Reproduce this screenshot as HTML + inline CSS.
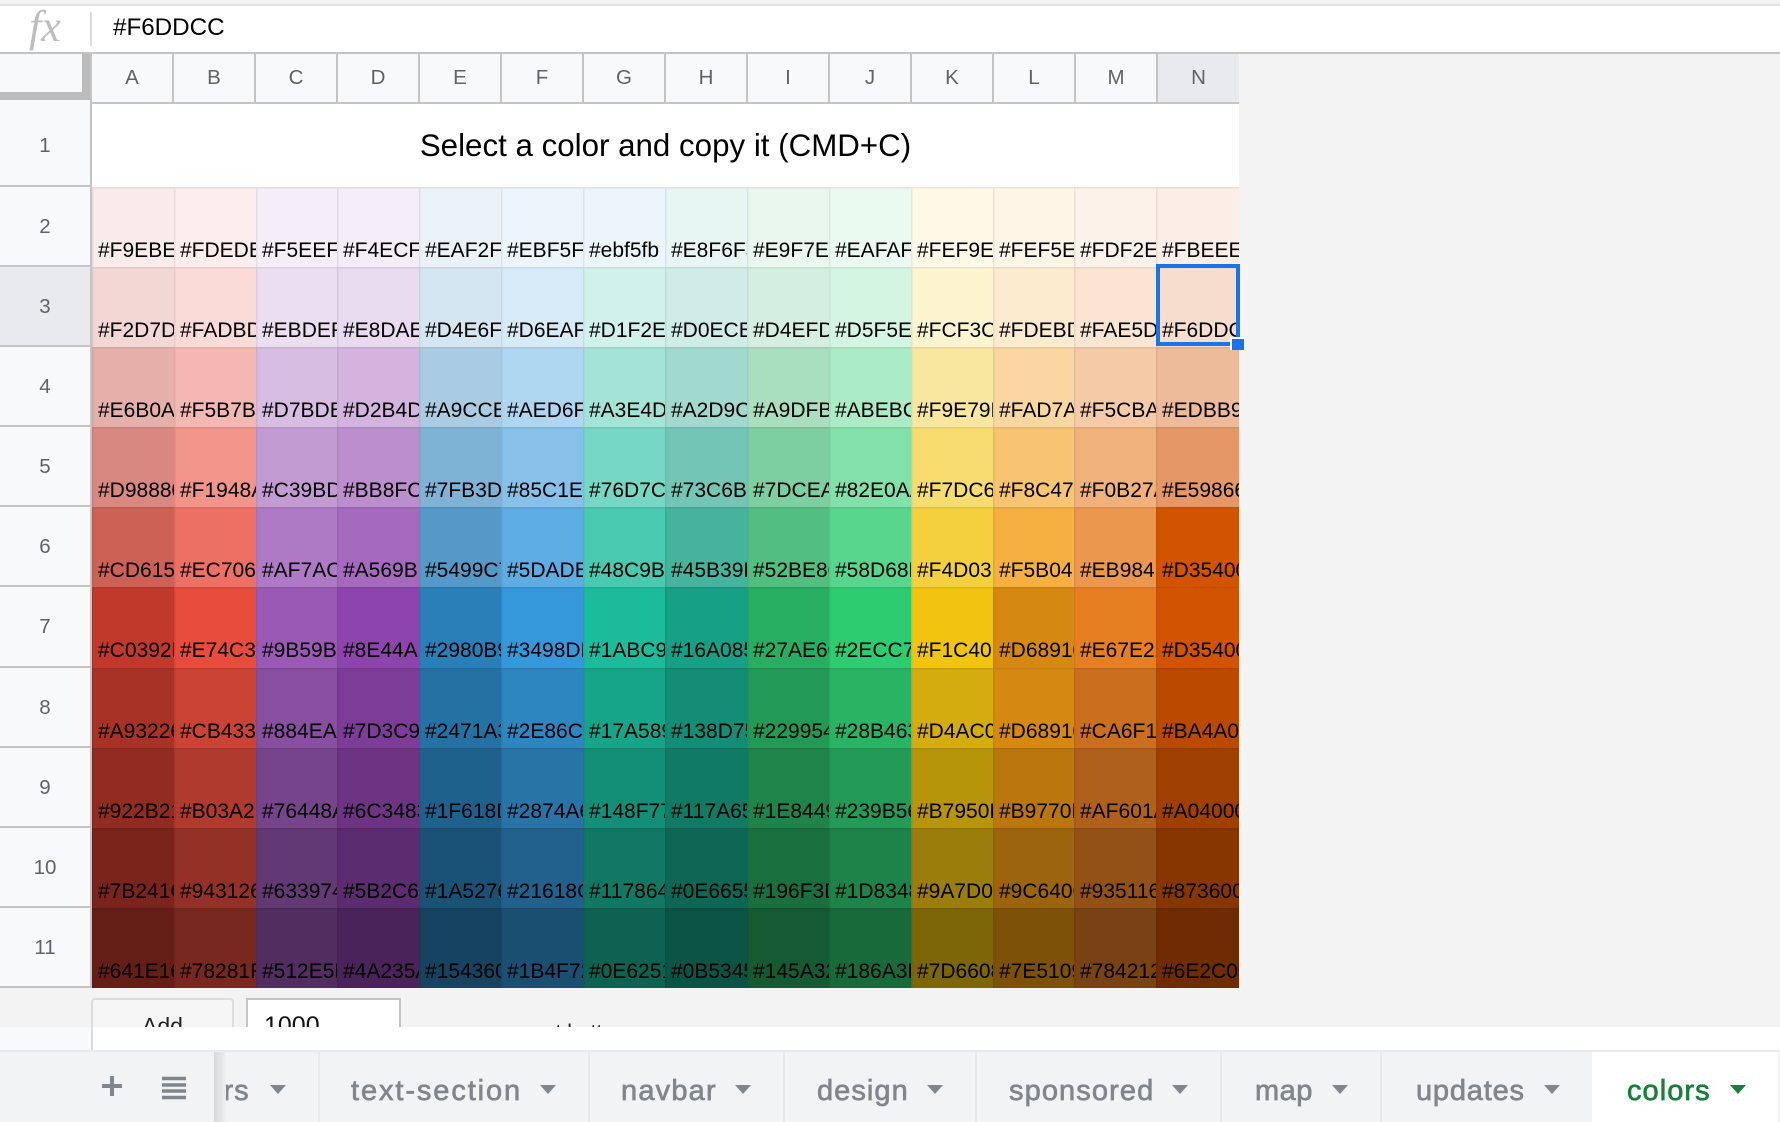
<!DOCTYPE html>
<html><head><meta charset="utf-8"><title>colors</title>
<style>
html,body{margin:0;padding:0;width:1780px;height:1122px;overflow:hidden;background:#f3f3f3;font-family:"Liberation Sans",Arial,sans-serif}
.a{position:absolute}
#topline{left:0;top:4px;width:1780px;height:2px;background:#e0e0e0}
#fbar{left:0;top:6px;width:1780px;height:47px;background:#fff}
#fbline{left:0;top:52px;width:1780px;height:2px;background:#c4c4c4}
#fx{left:29px;top:3px;font:italic 44px/48px "Liberation Serif",serif;color:#bdbdbd}
#fsep{left:90px;top:12px;width:2px;height:34px;background:#dcdcdc}
#ftext{left:113px;top:14px;font-size:24.2px;line-height:28px;color:#000}
#corner{left:0;top:54px;width:91px;height:49px;background:#f8f9fa}
#cb1{left:82px;top:54px;width:9px;height:46px;background:#bcbcbc}
#cb2{left:0;top:92px;width:91px;height:8px;background:#bcbcbc}
#cols{left:90px;top:54px;width:1149px;height:50px;display:grid;grid-template-columns:repeat(13,82px) 83px;background:#f8f9fa}
#cols div{box-sizing:border-box;height:50px;border-left:2px solid #c4c4c4;border-bottom:2px solid #c4c4c4;text-align:center;font-size:20.5px;line-height:48px;color:#5f6368}
#cols div.s{background:#e8eaed}
#rows{left:0;top:103px;width:92px}
#rows div{box-sizing:border-box;width:92px;background:#f8f9fa;border-right:2px solid #c4c4c4;border-bottom:2px solid #c4c4c4;text-align:center;padding-right:0;font-size:20.5px;color:#5f6368;height:80.1px;line-height:80px}
#title{left:92px;top:104px;width:1147px;height:83px;background:#fff;text-align:center;font-size:31.3px;line-height:84px;color:#000}
#grid{left:92px;top:187px;width:1147px;display:grid;grid-template-columns:82px 82px 81px 82px 82px 82px 82px 82px 82px 82px 82px 81px 82px 83px;grid-auto-rows:80.1px}
#grid div{box-sizing:border-box;overflow:hidden;white-space:nowrap;font-size:21px;line-height:23px;padding:52px 0 0 6px;color:#000;box-shadow:inset 1.5px 1.5px 0 rgba(0,0,0,.07)}
#sel{left:1156px;top:264px;width:84px;height:82px;box-sizing:border-box;border:4px solid #1a73e8}
#hd{left:1230px;top:337px;width:12px;height:11px;background:#1a73e8;border:2px solid #fff;border-right:0;border-bottom:0}
#hdb{left:1232px;top:339px;width:12px;height:11px;background:#1a73e8}
#under{left:0;top:988px;width:1780px;height:39px;background:#f3f3f3;overflow:hidden}
#add{left:91px;top:10px;width:143px;height:50px;box-sizing:border-box;border:2px solid #dcdcdc;border-radius:4px;background:#f5f5f5;text-align:center;font-size:23px;line-height:52px;color:#222}
#inp{left:246px;top:10px;width:155px;height:50px;box-sizing:border-box;border:2px solid #c4c4c4;background:#fff;font-size:25px;line-height:52px;padding-left:16px;color:#111}
#more{left:440px;top:33px;font-size:21px;line-height:24px;color:#222;white-space:nowrap}
#white{left:0;top:1027px;width:1780px;height:23px;background:#fff}
#wl{left:0;top:1027px;width:91px;height:23px;background:#f8f9fa;border-right:2px solid #dcdcdc}
#bar{left:0;top:1050px;width:1780px;height:72px;background:#f1f3f4;border-top:2px solid #e8eaed;box-sizing:border-box;overflow:hidden}
.tab{position:absolute;top:13px;font-size:29px;line-height:52px;color:#80868b;-webkit-text-stroke:.7px currentColor;white-space:nowrap}
.car{position:absolute;top:33px;width:0;height:0;border-left:8px solid transparent;border-right:8px solid transparent;border-top:9px solid #80868b}
.sep{position:absolute;top:0;width:2px;height:70px;background:#e6e8ea}
#active{position:absolute;left:1592px;top:0;width:186px;height:70px;background:#fff}
#lp{position:absolute;left:0;top:0;width:214px;height:70px;background:#f1f3f4}
#sh{position:absolute;left:214px;top:0;width:12px;height:70px;background:linear-gradient(90deg,#d8d9da,#eceef0)}
</style></head><body>
<div class="a" id="topline"></div><div class="a" id="fbar"></div><div class="a" id="fbline"></div>
<div class="a" id="fx">fx</div><div class="a" id="fsep"></div><div class="a" id="ftext">#F6DDCC</div>
<div class="a" id="corner"></div><div class="a" id="cb1"></div><div class="a" id="cb2"></div>
<div class="a" id="cols"><div>A</div><div>B</div><div>C</div><div>D</div><div>E</div><div>F</div><div>G</div><div>H</div><div>I</div><div>J</div><div>K</div><div>L</div><div>M</div><div class="s">N</div></div>
<div class="a" id="rows">
<div style="height:84px;line-height:86px">1</div>
<div>2</div>
<div style="background:#e8eaed">3</div>
<div>4</div>
<div>5</div>
<div>6</div>
<div>7</div>
<div>8</div>
<div>9</div>
<div>10</div>
<div>11</div>
</div>
<div class="a" id="title">Select a color and copy it (CMD+C)</div>
<div class="a" id="grid">
<div style="background:#F9EBEA">#F9EBEA</div><div style="background:#FDEDEC">#FDEDEC</div><div style="background:#F5EEF8">#F5EEF8</div><div style="background:#F4ECF7">#F4ECF7</div><div style="background:#EAF2F8">#EAF2F8</div><div style="background:#EBF5FB">#EBF5FB</div><div style="background:#ebf5fb">#ebf5fb</div><div style="background:#E8F6F3">#E8F6F3</div><div style="background:#E9F7EF">#E9F7EF</div><div style="background:#EAFAF1">#EAFAF1</div><div style="background:#FEF9E7">#FEF9E7</div><div style="background:#FEF5E7">#FEF5E7</div><div style="background:#FDF2E9">#FDF2E9</div><div style="background:#FBEEE6">#FBEEE6</div>
<div style="background:#F2D7D5">#F2D7D5</div><div style="background:#FADBD8">#FADBD8</div><div style="background:#EBDEF0">#EBDEF0</div><div style="background:#E8DAEF">#E8DAEF</div><div style="background:#D4E6F1">#D4E6F1</div><div style="background:#D6EAF8">#D6EAF8</div><div style="background:#D1F2EB">#D1F2EB</div><div style="background:#D0ECE7">#D0ECE7</div><div style="background:#D4EFDF">#D4EFDF</div><div style="background:#D5F5E3">#D5F5E3</div><div style="background:#FCF3CF">#FCF3CF</div><div style="background:#FDEBD0">#FDEBD0</div><div style="background:#FAE5D3">#FAE5D3</div><div style="background:#F6DDCC">#F6DDCC</div>
<div style="background:#E6B0AA">#E6B0AA</div><div style="background:#F5B7B1">#F5B7B1</div><div style="background:#D7BDE2">#D7BDE2</div><div style="background:#D2B4DE">#D2B4DE</div><div style="background:#A9CCE3">#A9CCE3</div><div style="background:#AED6F1">#AED6F1</div><div style="background:#A3E4D7">#A3E4D7</div><div style="background:#A2D9CE">#A2D9CE</div><div style="background:#A9DFBF">#A9DFBF</div><div style="background:#ABEBC6">#ABEBC6</div><div style="background:#F9E79F">#F9E79F</div><div style="background:#FAD7A0">#FAD7A0</div><div style="background:#F5CBA7">#F5CBA7</div><div style="background:#EDBB99">#EDBB99</div>
<div style="background:#D98880">#D98880</div><div style="background:#F1948A">#F1948A</div><div style="background:#C39BD3">#C39BD3</div><div style="background:#BB8FCE">#BB8FCE</div><div style="background:#7FB3D5">#7FB3D5</div><div style="background:#85C1E9">#85C1E9</div><div style="background:#76D7C4">#76D7C4</div><div style="background:#73C6B6">#73C6B6</div><div style="background:#7DCEA0">#7DCEA0</div><div style="background:#82E0AA">#82E0AA</div><div style="background:#F7DC6F">#F7DC6F</div><div style="background:#F8C471">#F8C471</div><div style="background:#F0B27A">#F0B27A</div><div style="background:#E59866">#E59866</div>
<div style="background:#CD6155">#CD6155</div><div style="background:#EC7063">#EC7063</div><div style="background:#AF7AC5">#AF7AC5</div><div style="background:#A569BD">#A569BD</div><div style="background:#5499C7">#5499C7</div><div style="background:#5DADE2">#5DADE2</div><div style="background:#48C9B0">#48C9B0</div><div style="background:#45B39D">#45B39D</div><div style="background:#52BE80">#52BE80</div><div style="background:#58D68D">#58D68D</div><div style="background:#F4D03F">#F4D03F</div><div style="background:#F5B041">#F5B041</div><div style="background:#EB984E">#EB984E</div><div style="background:#D35400">#D35400</div>
<div style="background:#C0392B">#C0392B</div><div style="background:#E74C3C">#E74C3C</div><div style="background:#9B59B6">#9B59B6</div><div style="background:#8E44AD">#8E44AD</div><div style="background:#2980B9">#2980B9</div><div style="background:#3498DB">#3498DB</div><div style="background:#1ABC9C">#1ABC9C</div><div style="background:#16A085">#16A085</div><div style="background:#27AE60">#27AE60</div><div style="background:#2ECC71">#2ECC71</div><div style="background:#F1C40F">#F1C40F</div><div style="background:#D68910">#D68910</div><div style="background:#E67E22">#E67E22</div><div style="background:#D35400">#D35400</div>
<div style="background:#A93226">#A93226</div><div style="background:#CB4335">#CB4335</div><div style="background:#884EA0">#884EA0</div><div style="background:#7D3C98">#7D3C98</div><div style="background:#2471A3">#2471A3</div><div style="background:#2E86C1">#2E86C1</div><div style="background:#17A589">#17A589</div><div style="background:#138D75">#138D75</div><div style="background:#229954">#229954</div><div style="background:#28B463">#28B463</div><div style="background:#D4AC0D">#D4AC0D</div><div style="background:#D68910">#D68910</div><div style="background:#CA6F1E">#CA6F1E</div><div style="background:#BA4A00">#BA4A00</div>
<div style="background:#922B21">#922B21</div><div style="background:#B03A2E">#B03A2E</div><div style="background:#76448A">#76448A</div><div style="background:#6C3483">#6C3483</div><div style="background:#1F618D">#1F618D</div><div style="background:#2874A6">#2874A6</div><div style="background:#148F77">#148F77</div><div style="background:#117A65">#117A65</div><div style="background:#1E8449">#1E8449</div><div style="background:#239B56">#239B56</div><div style="background:#B7950B">#B7950B</div><div style="background:#B9770E">#B9770E</div><div style="background:#AF601A">#AF601A</div><div style="background:#A04000">#A04000</div>
<div style="background:#7B241C">#7B241C</div><div style="background:#943126">#943126</div><div style="background:#633974">#633974</div><div style="background:#5B2C6F">#5B2C6F</div><div style="background:#1A5276">#1A5276</div><div style="background:#21618C">#21618C</div><div style="background:#117864">#117864</div><div style="background:#0E6655">#0E6655</div><div style="background:#196F3D">#196F3D</div><div style="background:#1D8348">#1D8348</div><div style="background:#9A7D0A">#9A7D0A</div><div style="background:#9C640C">#9C640C</div><div style="background:#935116">#935116</div><div style="background:#873600">#873600</div>
<div style="background:#641E16">#641E16</div><div style="background:#78281F">#78281F</div><div style="background:#512E5F">#512E5F</div><div style="background:#4A235A">#4A235A</div><div style="background:#154360">#154360</div><div style="background:#1B4F72">#1B4F72</div><div style="background:#0E6251">#0E6251</div><div style="background:#0B5345">#0B5345</div><div style="background:#145A32">#145A32</div><div style="background:#186A3B">#186A3B</div><div style="background:#7D6608">#7D6608</div><div style="background:#7E5109">#7E5109</div><div style="background:#784212">#784212</div><div style="background:#6E2C00">#6E2C00</div>
</div>
<div class="a" id="sel"></div><div class="a" id="hd"></div><div class="a" id="hdb"></div>
<div class="a" id="under">
<div class="a" id="add">Add</div><div class="a" id="inp">1000</div><div class="a" id="more">more rows at bottom.</div>
</div>
<div class="a" id="white"></div><div class="a" id="wl"></div>
<div class="a" id="bar">
<span class="tab" style="left:163px;letter-spacing:1px">others</span><i class="car" style="left:270px"></i>
<i class="sep" style="left:318px"></i>
<span class="tab" style="left:351px;letter-spacing:1.9px">text-section</span><i class="car" style="left:540px"></i>
<i class="sep" style="left:588px"></i>
<span class="tab" style="left:621px;letter-spacing:1.2px">navbar</span><i class="car" style="left:735px"></i>
<i class="sep" style="left:783px"></i>
<span class="tab" style="left:817px;letter-spacing:1.05px">design</span><i class="car" style="left:927px"></i>
<i class="sep" style="left:975px"></i>
<span class="tab" style="left:1009px;letter-spacing:1.1px">sponsored</span><i class="car" style="left:1172px"></i>
<i class="sep" style="left:1220px"></i>
<span class="tab" style="left:1255px;letter-spacing:.5px">map</span><i class="car" style="left:1332px"></i>
<i class="sep" style="left:1380px"></i>
<span class="tab" style="left:1416px;letter-spacing:.8px">updates</span><i class="car" style="left:1544px"></i>
<div id="active"></div>
<span class="tab" style="left:1627px;letter-spacing:1.05px;color:#188038">colors</span><i class="car" style="left:1730px;border-top-color:#188038"></i>
<div id="lp"></div><div id="sh"></div>
<svg class="a" style="left:100px;top:22px" width="24" height="24" viewBox="0 0 24 24"><path d="M12 2v20M2 12h20" stroke="#80868b" stroke-width="4" fill="none"/></svg>
<svg class="a" style="left:161px;top:24px" width="26" height="24" viewBox="0 0 26 24"><path d="M1 2.5h24M1 9h24M1 15h24M1 21.5h24" stroke="#80868b" stroke-width="3.4" fill="none"/></svg>
</div>
</body></html>
